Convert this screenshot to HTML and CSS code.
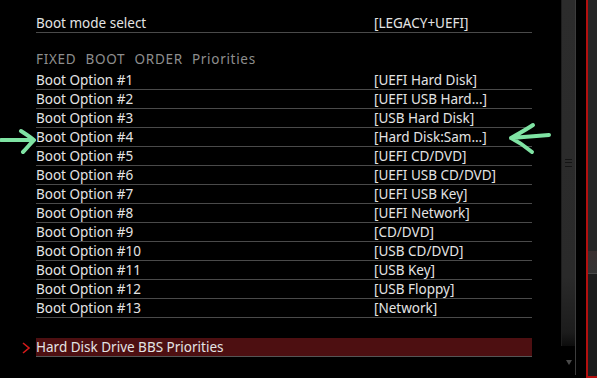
FILE: index.html
```html
<!DOCTYPE html>
<html lang="en">
<head>
  <meta charset="UTF-8" />
  <title>Boot</title>
  <link rel="stylesheet" href="styles.css">
</head>
<body>
  <div class="screen">
    <main class="panel">
      <div class="row">
        <span class="label">Boot mode select</span>
        <span class="value">[LEGACY+UEFI]</span>
      </div>

      <div class="group-title">FIXED BOOT ORDER Priorities</div>

      <div class="row"><span class="label">Boot Option #1</span><span class="value">[UEFI Hard Disk]</span></div>
      <div class="row"><span class="label">Boot Option #2</span><span class="value">[UEFI USB Hard...]</span></div>
      <div class="row"><span class="label">Boot Option #3</span><span class="value">[USB Hard Disk]</span></div>
      <div class="row"><span class="label">Boot Option #4</span><span class="value">[Hard Disk:Sam...]</span></div>
      <div class="row"><span class="label">Boot Option #5</span><span class="value">[UEFI CD/DVD]</span></div>
      <div class="row"><span class="label">Boot Option #6</span><span class="value">[UEFI USB CD/DVD]</span></div>
      <div class="row"><span class="label">Boot Option #7</span><span class="value">[UEFI USB Key]</span></div>
      <div class="row"><span class="label">Boot Option #8</span><span class="value">[UEFI Network]</span></div>
      <div class="row"><span class="label">Boot Option #9</span><span class="value">[CD/DVD]</span></div>
      <div class="row"><span class="label">Boot Option #10</span><span class="value">[USB CD/DVD]</span></div>
      <div class="row"><span class="label">Boot Option #11</span><span class="value">[USB Key]</span></div>
      <div class="row"><span class="label">Boot Option #12</span><span class="value">[USB Floppy]</span></div>
      <div class="row"><span class="label">Boot Option #13</span><span class="value">[Network]</span></div>

      <div class="row submenu">
        <svg class="chevron" width="9" height="12" viewBox="0 0 9 12">
          <polyline points="1,1 7,6 1,11" fill="none" stroke="#d41a1a" stroke-width="1.6"/>
        </svg>
        <span class="label">Hard Disk Drive BBS Priorities</span>
      </div>

      <!-- hand drawn marks around option #4 -->
      <svg class="mark mark-left" width="40" height="30" viewBox="0 0 40 30">
        <path d="M1 15 C10 15 22 15 33 15 M21 6 C26 9 30 12 34 15 C30 19 27 23 23 27" fill="none" stroke="#7fe3a3" stroke-width="4" stroke-linecap="round" stroke-linejoin="round"/>
      </svg>
      <svg class="mark mark-right" width="60" height="34" viewBox="0 0 60 34">
        <path d="M4 16 C18 15 30 14 42 13 M26 3 C20 7 13 11 4 16 C12 20 19 25 25 30" fill="none" stroke="#7fe3a3" stroke-width="4" stroke-linecap="round" stroke-linejoin="round"/>
      </svg>
    </main>

    <div class="scrollbar">
      <div class="thumb">
        <div class="grip"></div>
      </div>
      <div class="arrow-down"></div>
    </div>
    <div class="gap"></div>
    <div class="side">
      <div class="side-top"></div>
      <div class="side-mark"></div>
      <div class="side-bottom"></div>
    </div>
  </div>
</body>
</html>
```

FILE: styles.css
```css
* {
  box-sizing: border-box;
  margin: 0;
  padding: 0;
}

html,
body {
  background: #fff;
}

body {
  font-family: "Noto Sans", "Open Sans", sans-serif;
  font-size: 13.5px;
  color: #e4e4e4;
}

.screen {
  display: flex;
  height: 378px;
  background: #000;
}

.panel {
  position: relative;
  width: 561px;
  padding: 14px 0 0 36px;
}

.row {
  display: flex;
  width: 496px;
  height: 19px;
  line-height: 18px;
  border-bottom: 1px solid #4a4a4a;
  white-space: nowrap;
}

.label {
  width: 338px;
}

.group-title {
  margin-top: 17px;
  height: 21px;
  line-height: 18px;
  color: #8e8e8e;
  letter-spacing: 0.7px;
  word-spacing: 5px;
}

.submenu {
  position: relative;
  margin-top: 20px;
  background: #4d0f11;
  border-bottom-color: #555;
}

.chevron {
  position: absolute;
  left: -14px;
  top: 4px;
}

.mark {
  position: absolute;
}

.mark-left {
  left: 0;
  top: 125px;
}

.mark-right {
  left: 507px;
  top: 122px;
}

.scrollbar {
  position: relative;
  width: 15px;
  border-right: 1px solid #3c3c3c;
  margin-bottom: 3px;
}

.thumb {
  position: relative;
  width: 14px;
  height: 346px;
  background: linear-gradient(#2c2c2c, #2a2a2a 80%, #1c1c1c 96%, #0c0c0c);
  border-left: 1px solid #1e1e1e;
}

.grip {
  position: absolute;
  left: 3px;
  top: 159px;
  width: 7px;
  height: 8px;
  border-top: 1px solid #141414;
  border-bottom: 1px solid #141414;
}

.grip::after {
  content: "";
  position: absolute;
  left: 0;
  top: 2px;
  width: 7px;
  border-top: 1px solid #141414;
}

.arrow-down {
  position: absolute;
  left: 5px;
  top: 360px;
  border-left: 3px solid transparent;
  border-right: 3px solid transparent;
  border-top: 5px solid #4a4a4a;
}

.gap {
  width: 10px;
}

.side {
  flex: 1;
  display: flex;
  flex-direction: column;
  border-left: 2px solid #b3100f;
  border-bottom: 2px solid #b3100f;
}

.side-top {
  height: 251px;
  background: #272727;
}

.side-mark {
  height: 23px;
  background: linear-gradient(#3a3030, #343434);
  border-bottom: 1px solid #4a4a4a;
}

.side-bottom {
  flex: 1;
  background: #1d1d1d;
}
```
